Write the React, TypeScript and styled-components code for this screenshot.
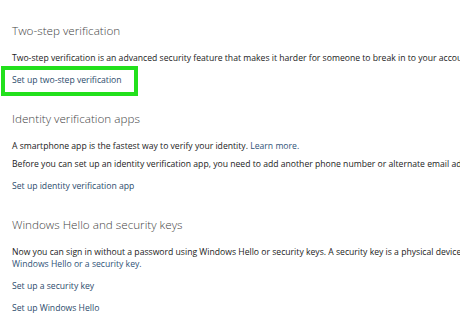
import React from "react";
import styled, { createGlobalStyle } from "styled-components";

const Global = createGlobalStyle`
  html, body { margin: 0; padding: 0; background: #ffffff; }
  body { width: 460px; height: 320px; overflow: hidden; }
`;

const Page = styled.div`
  width: 460px;
  height: 320px;
  overflow: hidden;
  background: #ffffff;
  font-family: "Open Sans", "Noto Sans", sans-serif;
  padding: 21px 0 0 12px;
  box-sizing: border-box;
  display: flex;
  flex-direction: column;
`;

const Section = styled.section`
  display: flex;
  flex-direction: column;
  margin-bottom: 18px;
  width: 900px;
`;

const Heading = styled.h2`
  margin: 0 0 13px 0;
  font-size: 11.7px;
  line-height: 18px;
  font-weight: 300;
  color: #444444;
  white-space: nowrap;
`;

const Para = styled.p`
  margin: 0 0 6px 0;
  font-size: 8.65px;
  line-height: 12px;
  color: #1b1b1b;
  white-space: nowrap;
`;

const InlineLink = styled.span`
  color: #2f5377;
`;

const Links = styled.div`
  display: flex;
  flex-direction: column;
  align-items: flex-start;
  margin-top: -1px;
`;

const ActionLink = styled.span<{ $highlight?: boolean }>`
  position: relative;
  display: block;
  font-size: 8.65px;
  line-height: 22px;
  color: #2c4b6c;
  white-space: nowrap;
  ${(p) =>
    p.$highlight &&
    `
    &::after {
      content: "";
      position: absolute;
      left: -11px;
      right: -16px;
      top: -3px;
      bottom: -5px;
      border: 4px solid #22e01c;
    }
  `}
`;

export default function App() {
  return (
    <>
      <Global />
      <Page>
        <Section>
          <Heading>Two-step verification</Heading>
          <Para>
            Two-step verification is an advanced security feature that makes it harder for someone to break in to your account.
          </Para>
          <Links>
            <ActionLink $highlight>Set up two-step verification</ActionLink>
          </Links>
        </Section>
        <Section>
          <Heading>Identity verification apps</Heading>
          <Para>
            A smartphone app is the fastest way to verify your identity. <InlineLink>Learn more.</InlineLink>
          </Para>
          <Para>
            Before you can set up an identity verification app, you need to add another phone number or alternate email address.
          </Para>
          <Links>
            <ActionLink>Set up identity verification app</ActionLink>
          </Links>
        </Section>
        <Section>
          <Heading>Windows Hello and security keys</Heading>
          <Para>
            Now you can sign in without a password using Windows Hello or security keys. A security key is a physical device that you can use to sign in. Learn more about
            <br />
            <InlineLink>Windows Hello or a security key.</InlineLink>
          </Para>
          <Links>
            <ActionLink>Set up a security key</ActionLink>
            <ActionLink>Set up Windows Hello</ActionLink>
          </Links>
        </Section>
      </Page>
    </>
  );
}
